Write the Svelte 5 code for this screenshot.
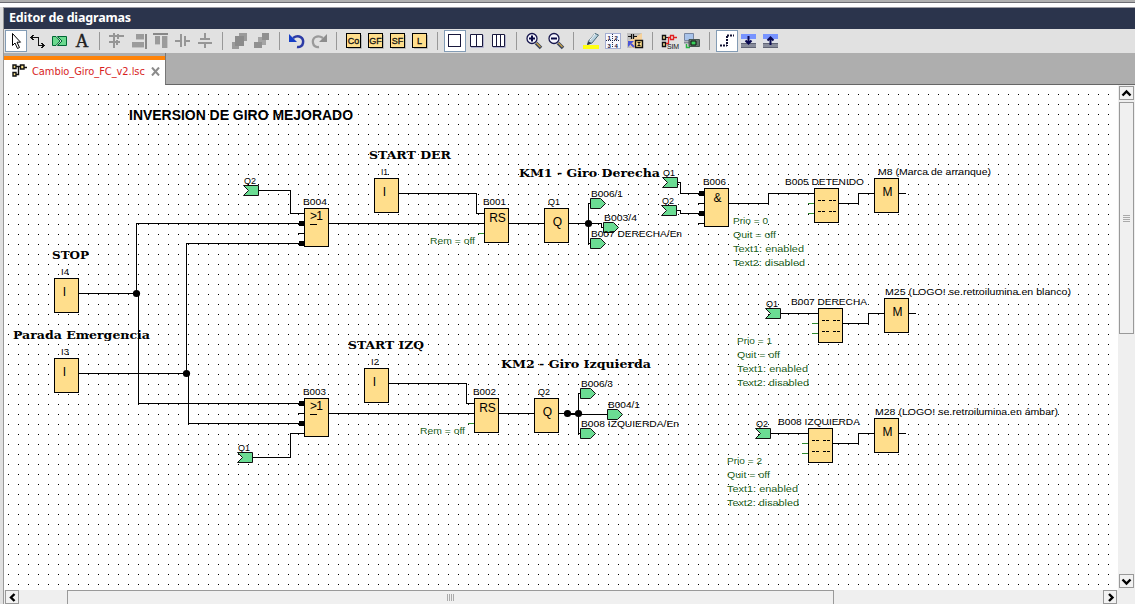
<script>
  const groups = [
    ['select', 'wire', 'connector', 'text'],
    ['grid', 'right', 'top', 'vcenter', 'hcenter'],
    ['front', 'back'],
    ['undo', 'redo'],
    ['Co', 'GF', 'SF', 'L'],
    ['one', 'two', 'three'],
    ['zoomin', 'zoomout'],
    ['marker', 'pages', 'convert'],
    ['sim', 'online'],
    ['lines', 'down', 'up']
  ];
  const active = ['select', 'one', 'lines'];

  const blocks = [
    [54, 278, 'I'], [54, 358, 'I'], [304, 208, 'or'], [374, 178, 'I'], [484, 208, 'RS'],
    [544, 208, 'Q'], [704, 188, '&'], [814, 188, 'msg'], [874, 178, 'M'], [818, 308, 'msg'],
    [884, 298, 'M'], [808, 428, 'msg'], [874, 418, 'M'], [304, 398, 'or'], [364, 368, 'I'],
    [474, 398, 'RS'], [534, 398, 'Q']
  ];
  const wires = [
    'M79 293.5H136.5V223.5H304', 'M136.5 293.5H138.5V403.5H304',
    'M79 373.5H186.5V243.5H304', 'M186.5 373.5H188.5V423.5H304',
    'M298 233.5H304M298 413.5H304',
    'M259 190.5H290.5V213.5H304', 'M253 457.5H290.5V433.5H304',
    'M329 223.5H484', 'M399 193.5H476.5V213.5H484', 'M509 223.5H544',
    'M569 223.5H601.5V227.5H604', 'M591 203.5H588.5V243.5H591',
    'M678 182.5H680.5V193.5H704', 'M676 210.5H680.5V213.5H704', 'M698 203.5H704M698 223.5H704',
    'M729 203.5H768.5V193.5H814', 'M839 203.5H858.5V193.5H874M899 193.5H906',
    'M781 313.5H818M843 323.5H868.5V313.5H884M909 313.5H916',
    'M771 433.5H808M833 443.5H858.5V433.5H874M899 433.5H906',
    'M389 383.5H466.5V403.5H474', 'M329 413.5H474M499 413.5H534M559 413.5H578M567 414.5H607',
    'M581 393.5H578.5V433.5H581'
  ];
  const stubs = 'M478 233.5H484M468 423.5H474M808 203.5H814M808 213.5H814M812 323.5H818M812 333.5H818M802 443.5H808M802 453.5H808';
  const joints = [[136.5, 293.5], [186.5, 373.5], [588.5, 223.5], [567.5, 413.5], [578.5, 413.5]];
  const negated = [[299, 223], [299, 243], [299, 403], [299, 423], [699, 193], [699, 213]];
  const inputs = [[243, 185], [237, 452], [662, 177], [661, 205], [765, 308], [755, 428]];
  const outputs = [[590, 198], [603, 222], [590, 238], [580, 388], [607, 409], [580, 428]];

  const labels = [
    ['I4', 61, 275, 8], ['I3', 61, 355, 8], ['B004', 303, 205, 24], ['B001', 483, 205, 23],
    ['I1', 381, 175, 7], ['Q2', 244, 184, 12], ['Q1', 548, 205, 12], ['B006/1', 591, 197, 32],
    ['B003/4', 604, 221, 33], ['B007 DERECHA/En', 591, 237, 91], ['Q1', 663, 176, 12],
    ['Q2', 662, 204, 12], ['B006', 703, 185, 23], ['B005 DETENIDO', 785, 185, 79],
    ['M8 (Marca de arranque)', 878, 175, 113], ['M25 (LOGO! se.retroilumina.en blanco)', 885, 295, 186],
    ['B007 DERECHA', 791, 305, 76], ['Q1', 766, 307, 12],
    ['M28 (LOGO! se.retroilumina.en ámbar)', 875, 415, 183], ['B008 IZQUIERDA', 778, 425, 82],
    ['Q2', 756, 427, 12], ['B003', 303, 395, 23], ['I2', 371, 365, 8], ['Q1', 238, 451, 12],
    ['B002', 473, 395, 23], ['Q2', 538, 395, 12], ['B006/3', 581, 387, 32],
    ['B004/1', 608, 408, 32], ['B008 IZQUIERDA/En', 581, 427, 98]
  ];
  const params = [['Rem = off', 430, 244, 45], ['Rem = off', 420, 434, 45]];
  for (const [x, y, n] of [[733, 224, 0], [737, 344, 1], [727, 464, 2]]) {
    params.push([`Prio = ${n}`, x, y, 35], ['Quit = off', x, y + 14, 43], ['Text1: enabled', x, y + 28, 71], ['Text2: disabled', x, y + 42, 72]);
  }
  const headings = [
    ['START DER', 369, 159, 82], ['STOP', 52, 259, 37], ['Parada Emergencia', 13, 339, 137],
    ['START IZQ', 348, 349, 76], ['KM1 - Giro Derecha', 519, 177, 141], ['KM2 - Giro Izquierda', 501, 368, 150]
  ];
</script>

{#snippet icon(name)}
  <svg width="22" height="22" viewBox="0 0 22 22" fill="none">
    {#if name === 'select'}
      <path d="M7.500 3.500V15.500L10 13L12.500 18.500L14.500 17.500L12 12.200H15.500Z" fill="#fff" stroke="#000" />
    {:else if name === 'wire'}
      <path d="M4 7.500H11.500V15.500H17M6.500 5L4 7.500L6.500 10M14.500 13L17 15.500L14.500 18" stroke="#111" shape-rendering="crispEdges" />
    {:else if name === 'connector'}
      <path d="M3.500 6.500H7L11 11L7 15.500H3.500Z" fill="#6bd98e" stroke="#063" />
      <path d="M8.500 6.500H17.500V15.500H8.500L13 11Z" fill="#6bd98e" stroke="#063" />
    {:else if name === 'text'}
      <text x="11" y="17" class="letter">A</text>
    {:else if name === 'grid'}
      <path d="M7 3H9V18H7ZM3 5H18V7H3ZM3 11H14V13H3ZM11 4H13V9H11ZM10 10H12V15H10Z" fill="#969696" />
    {:else if name === 'right'}
      <path d="M17 4H19V19H17Z" fill="#888" /><path d="M8 4H16V9H8ZM4 12H16V17H4Z" fill="#9b9b9b" /><path d="M4 17.500H16M8 9.500H16" stroke="#c2c2c2" />
    {:else if name === 'top'}
      <path d="M3 3H18V5H3Z" fill="#888" /><path d="M5 6H10V14H5ZM12 6H17V18H12Z" fill="#9b9b9b" /><path d="M5 14.500H10M17.500 6V18" stroke="#c5c5c5" />
    {:else if name === 'vcenter'}
      <path d="M8 4H10V17H8ZM12 6H14V16H12ZM3 10H8V12H3ZM14 10H18V12H14Z" fill="#969696" />
    {:else if name === 'hcenter'}
      <path d="M10 3H12V8H10ZM6 8H16V10H6ZM4 12H18V14H4ZM10 14H12V18H10Z" fill="#969696" />
    {:else if name === 'front'}
      <path d="M10 3H18V11H10ZM3 12H10V19H3Z" fill="#9b9b9b" /><path d="M6 6H15V16H6Z" fill="#8b8b8b" />
    {:else if name === 'back'}
      <path d="M7 7H15V15H7Z" fill="#a4a4a4" /><path d="M11 3H18V10H11ZM3 12H11V18H3Z" fill="#909090" />
    {:else if name === 'undo'}
      <path d="M7 8C13 4 18 8 17 13C16.500 16 14 17.500 11 17" stroke="#2c3ba5" stroke-width="2.500" /><path d="M3 4V12H11Z" fill="#173fc5" />
    {:else if name === 'redo'}
      <path d="M15 8C9 4 4 8 5 13C5.500 16 8 17.500 11 17" stroke="#9a9a9a" stroke-width="2.300" /><path d="M19 4V12H11Z" fill="#8d8d8d" />
    {:else if ['Co', 'GF', 'SF', 'L'].includes(name)}
      <path d="M5 18.500H18.500V5" stroke="#b6b6b6" /><rect x="3.500" y="3.500" width="14" height="14" fill="#ffde8c" stroke="#000" />
      <text x="10.500" y="14" class="mini">{name}</text>
    {:else if name === 'one'}
      <rect x="4.500" y="4.500" width="12" height="12" fill="#fff" stroke="#18183c" />
    {:else if name === 'two'}
      <path d="M5 17.500H17.500V5" stroke="#b4b4d0" /><path d="M4.500 4.500H16.500V16.500H4.500ZM10.500 4.500V16.500" fill="#fff" stroke="#18183c" />
    {:else if name === 'three'}
      <path d="M5 17.500H17.500V5" stroke="#b4b4d0" /><path d="M4.500 4.500H16.500V16.500H4.500ZM8.500 4.500V16.500M12.500 4.500V16.500" fill="#fff" stroke="#18183c" />
    {:else if name === 'zoomin' || name === 'zoomout'}
      <path d="M13 13L18 18" stroke="#39455c" stroke-width="3.500" /><path d="M13.500 13L17.500 17" stroke="#cda348" stroke-width="1.300" />
      <circle cx="9" cy="8.500" r="5" fill="#f7f7ff" stroke="#17174d" stroke-width="1.300" />
      <path d={name === 'zoomin' ? 'M6 8.500H12M9 5.500V11.500' : 'M6 8.500H12'} stroke="#080844" stroke-width="2" />
    {:else if name === 'marker'}
      <path d="M3 15H19V19H3Z" fill="#ffff12" /><path d="M7.500 14.500L8.500 11L15 3.500L18.500 5L12 13Z" fill="#b9d2df" stroke="#486878" /><path d="M7 15L8.500 11.500L11.500 13Z" fill="#334" /><path d="M10 10L15 4" stroke="#fff" />
    {:else if name === 'pages'}
      <rect x="3.500" y="3.500" width="15" height="15" fill="#f7f8ff" stroke="#a4aed2" /><path d="M4 10.500H18M10.500 4V18" stroke="#222b4c" stroke-dasharray="1 1" />
      <g class="digits"><text x="5.500" y="9.500">1</text><text x="12.500" y="9.500">2</text><text x="5.500" y="17.500">3</text><text x="12.500" y="17.500">4</text></g>
    {:else if name === 'convert'}
      <path d="M3 3H18V18H3Z" fill="#c0c0c0" /><path d="M18 3V18H8L3 12Z" fill="#f6d29b" />
      <path d="M4 6.500H7M7.500 4V9M9.500 4V9M10 6.500H13" stroke="#111" stroke-width="1.200" /><path d="M4 11H10L4 17Z" fill="#4854d7" /><path d="M7 14L10 17" stroke="#4854d7" stroke-width="2" />
      <path d="M11.500 10.500H18.500V17.500H11.500Z" fill="#ffdf8c" stroke="#111" stroke-width="1.400" /><path d="M13.500 12.500H16.500M15 12.500V15.500M13.500 15.500H16.500" stroke="#111" />
    {:else if name === 'sim'}
      <path d="M3.500 5.500H6.500V9.500H3.500ZM3.500 12.500H6.500V16.500H3.500Z" fill="#ffea9b" stroke="#111" stroke-width="1.400" /><path d="M7 7.500H10" stroke="#222" /><path d="M11.500 5.500H14.500V9.500H11.500ZM14.500 7.500H18M7 13.500H9.500V7.500H11" stroke="#e02020" stroke-width="1.300" />
      <text x="8" y="19" class="sim" textLength="12">SIM</text>
    {:else if name === 'online'}
      <path d="M3.500 3.500H12.500V10.500H3.500Z" fill="#a8c3ea" stroke="#7886a1" /><path d="M3 12.500H12" stroke="#858c99" stroke-width="2" /><path d="M8 9.500H18.500V16.500H8Z" fill="#65746e" stroke="#44534e" /><path d="M10 11H15V15H10Z" fill="#38cf5b" stroke="#111" /><path d="M5.500 14V17.500H9" stroke="#27b343" stroke-width="1.500" />
    {:else if name === 'lines'}
      <path d="M11 5.500H18M11 6V16M4 15.500H11" stroke="#101032" stroke-width="2" stroke-dasharray="2 1" />
    {:else}
      <rect x="3" y="4" width="15" height="5" fill="#7894ff" /><rect x="3" y="9" width="15" height="4" fill="#dfe2ea" /><rect x="3" y="13" width="15" height="5" fill="#888c9b" /><path d="M3 13.500H18M3 17.500H18" stroke="#606475" />
      <path d={name === 'down' ? 'M10.500 6V13M7.500 10.500L10.500 13.500L13.500 10.500' : 'M10.500 15V8M7.500 10.500L10.500 7.500L13.500 10.500'} stroke="#080850" stroke-width="2" />
    {/if}
  </svg>
{/snippet}

{#snippet arrow(d)}
  <svg width="11" height="11" viewBox="0 0 11 11"><path {d} fill="none" stroke="#000" stroke-width="2.400" /></svg>
{/snippet}

<div class="window">
  <div class="strip"></div>
  <div class="gap"></div>
  <div class="editor">
    <header>Editor de diagramas</header>
    <div class="toolbar">
      {#each groups as group, g}
        {#if g}<span class="separator"></span>{/if}
        {#each group as name}
          <span class="tool" class:active={active.includes(name)}>{@render icon(name)}</span>
        {/each}
      {/each}
    </div>
    <div class="tabs">
      <div class="tab">
        <svg width="16" height="14" viewBox="0 0 16 14"><path d="M4 2.500H8M11 3.500H15M4 10.500H6.500V3" stroke="#111" stroke-width="1.400" fill="none" /><path d="M1 1H4V4.500H1ZM1 8.500H4V12H1ZM8.500 1H12V5H8.500Z" fill="#ffe78f" stroke="#111" stroke-width="1.400" /></svg>
        <span class="filename">Cambio_Giro_FC_v2.lsc</span>
        <svg class="close" width="9" height="9" viewBox="0 0 9 9"><path d="M1 .5L8 8.500M8 .5L1 8.500" stroke="#8b8b8b" stroke-width="2" /></svg>
      </div>
      <div class="tabrest"></div>
    </div>
    <div class="work">
      <svg class="diagram" width="1114" height="505" viewBox="4 85 1114 505">
        <defs>
          <pattern id="dots" x="8" y="94" width="10" height="10" patternUnits="userSpaceOnUse"><rect width="1" height="1" fill="#000" /></pattern>
        </defs>
        <rect x="8" y="94" width="1101" height="491" fill="url(#dots)" shape-rendering="crispEdges" />
        <g fill="none" stroke="#000" shape-rendering="crispEdges">
          {#each wires as d}<path {d} />{/each}
          <path d={stubs} stroke="#2f8a2f" />
        </g>
        {#each blocks as [x, y, kind]}
          <rect x={x + 0.5} y={y + 0.5} width="24" height={kind === 'or' || kind === '&' ? 38 : 34} fill="#ffde8c" stroke="#000" />
          {#if kind === 'or'}
            <text class="symbol" x={x + 12.5} y={y + 12} textLength="13">&gt;1</text>
            <path d="M{x + 6} {y + 16.5}h7" stroke="#000" />
          {:else if kind === 'msg'}
            <path d="M{x + 4} {y + 12.5}h7m4 0h7M{x + 4} {y + 23.5}h7m4 0h7" stroke="#000" stroke-dasharray="3 1" />
          {:else}
            <text class="symbol" x={x + (kind === 'I' ? 10.5 : 13.5)} y={y + (kind === '&' || kind === 'RS' ? 14 : 18)}>{kind}</text>
          {/if}
        {/each}
        {#each negated as [x, y]}<rect {x} y={y - 2} width="5" height="5" />{/each}
        {#each joints as [x, y]}<circle cx={x} cy={y} r="3.600" />{/each}
        {#each inputs as [x, y]}<path class="ref" d="M{x + 0.5} {y + 0.5}h15v10h-15l5 -5z" />{/each}
        {#each outputs as [x, y]}<path class="ref" d="M{x + 0.5} {y + 0.5}h10l5 5l-5 5h-10z" />{/each}
        {#each labels as [label, x, y, w]}<text class="label" {x} {y} textLength={w} lengthAdjust="spacingAndGlyphs">{label}</text>{/each}
        {#each params as [label, x, y, w]}<text class="label param" {x} {y} textLength={w} lengthAdjust="spacingAndGlyphs">{label}</text>{/each}
        {#each headings as [label, x, y, w]}<text class="heading" {x} {y} textLength={w} lengthAdjust="spacingAndGlyphs">{label}</text>{/each}
        <text class="main" x="129" y="120" textLength="224" lengthAdjust="spacingAndGlyphs">INVERSION DE GIRO MEJORADO</text>
      </svg>
      <div class="vbar">
        <span class="btn">{@render arrow('M1.500 7.500L5.500 3.500L9.500 7.500')}</span>
        <span class="vthumb"><i></i><i></i><i></i><i></i></span>
        <span class="fill"></span>
        <span class="btn">{@render arrow('M1.500 3.500L5.500 7.500L9.500 3.500')}</span>
      </div>
    </div>
    <div class="hbar">
      <span class="btn">{@render arrow('M7.500 2L4 5.500L7.500 9')}</span>
      <span class="hthumb"><i></i><i></i><i></i><i></i></span>
      <span class="fill"></span>
      <span class="btn">{@render arrow('M4 2L7.500 5.500L4 9')}</span>
    </div>
  </div>
</div>

<style>
  :global(body) { margin: 0; overflow: hidden; }
  .window { width: 1135px; height: 604px; display: flex; flex-direction: column; background: #e1e1e1; overflow: hidden; box-sizing: border-box; }
  .strip { height: 2px; background: #b0b0b0; border-bottom: 1px solid #6c6c72; }
  .gap { height: 4px; background: #fff; }
  .editor { flex: 1; min-height: 0; margin-left: 3px; border-left: 1px solid #999; border-top: 1px solid #9b9ba3; display: flex; flex-direction: column; }
  header { height: 21px; flex: none; background: #2b344c; color: #fff; font: bold 12.5px/20px "Noto Sans", sans-serif; padding-left: 5px; letter-spacing: -.17px; white-space: nowrap; }
  .toolbar { height: 24px; flex: none; background: #e1e1e1; display: flex; align-items: center; padding-left: 1px; box-sizing: border-box; }
  .tool { width: 22px; height: 22px; display: block; box-sizing: border-box; }
  .tool svg { display: block; }
  .active { background: #fff; box-shadow: inset 0 0 0 1px #839cb5; }
  .separator { width: 1px; height: 18px; margin: 0 6px; background: #989898; }
  .letter { font: 18px "Liberation Serif", serif; fill: #222; stroke: #222; stroke-width: .4px; text-anchor: middle; }
  .mini { font: 9px "Liberation Sans", sans-serif; fill: #111; stroke: #111; stroke-width: .3px; text-anchor: middle; }
  .digits { font: bold 6px "Liberation Sans", sans-serif; fill: #171740; }
  .sim { font: 7px "Liberation Sans", sans-serif; fill: #111; }
  .tabs { height: 32px; flex: none; display: flex; background: #aeaeae; }
  .tab { width: 161px; height: 29px; margin-top: 3px; background: #fff; border-top: 4px solid #ff8308; display: flex; align-items: center; padding: 0 5px 3px 8px; box-sizing: border-box; }
  .tabrest { flex: 1; border-left: 1px solid #777; border-bottom: 1px solid #666; }
  .filename { font: 11px "DejaVu Sans Condensed", "DejaVu Sans", sans-serif; font-stretch: condensed; color: #d81e1e; margin-left: 4px; letter-spacing: -.06px; width: 114px; white-space: nowrap; }
  .close { margin-left: 5px; }
  .work { height: 505px; flex: none; display: flex; background: #fff; }
  .diagram { display: block; flex: none; }
  .label { font: 9.800px "Liberation Sans", sans-serif; fill: #000; }
  .label.param { fill: #235f23; }
  .symbol { font: 12px "Liberation Sans", sans-serif; text-anchor: middle; }
  .heading { font: bold 11px "DejaVu Serif", serif; }
  .main { font: bold 14px "Liberation Sans", sans-serif; }
  .ref { fill: #6bdc93; stroke: #111; }
  .vbar { width: 17px; background: #efefef; display: flex; flex-direction: column; align-items: center; padding: 1px 0 2px; box-sizing: border-box; }
  .btn { width: 15px; height: 14px; flex: none; border: 1px solid #999; background: #f2f2f2; box-sizing: border-box; display: flex; align-items: center; justify-content: center; }
  .vthumb { width: 15px; height: 232px; margin-top: 2px; border: 1px solid #999; background: #f0f0f0; box-sizing: border-box; display: flex; flex-direction: column; align-items: center; justify-content: center; gap: 1px; }
  .vthumb i { width: 7px; height: 1px; background: #aaa; }
  .fill { flex: 1; }
  .hbar { height: 14px; flex: none; display: flex; background: #efefef; padding: 0 18px 0 1px; }
  .hbar .btn { width: 14px; }
  .hthumb { width: 767px; margin-left: 48px; border: 1px solid #999; border-bottom: 0; background: #f0f0f0; box-sizing: border-box; display: flex; justify-content: center; align-items: center; gap: 1px; }
  .hthumb i { width: 1px; height: 7px; background: #aaa; }
</style>
